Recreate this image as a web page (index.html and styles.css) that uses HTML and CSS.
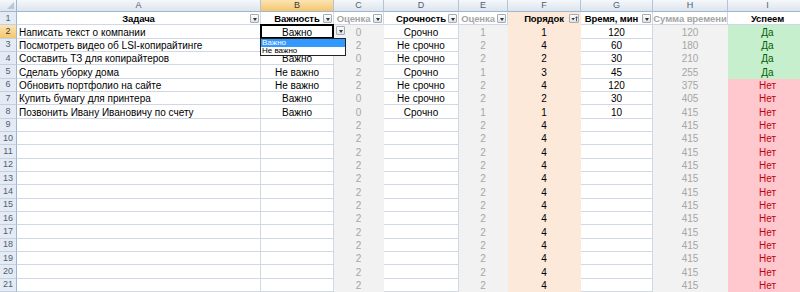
FILE: index.html
```html
<!DOCTYPE html>
<html lang="ru">
<head>
  <meta charset="UTF-8">
  <title>Задачи</title>
  <link rel="stylesheet" href="styles.css">
</head>
<body>
  <table class="sheet">
    <colgroup>
      <col class="w-rh"><col class="w-a"><col class="w-b"><col class="w-c"><col class="w-d">
      <col class="w-e"><col class="w-f"><col class="w-g"><col class="w-h"><col class="w-i">
    </colgroup>
    <tr class="colhead">
      <th class="corner"></th><th>A</th><th class="sel">B</th><th>C</th><th>D</th>
      <th>E</th><th>F</th><th>G</th><th>H</th><th>I</th>
    </tr>
    <tr class="head">
      <th class="rh">1</th>
      <td>Задача<span class="filter"></span></td>
      <td>Важность<span class="filter"></span></td>
      <td class="muted tight">Оценка<span class="filter"></span></td>
      <td>Срочность<span class="filter"></span></td>
      <td class="muted tight">Оценка<span class="filter"></span></td>
      <td class="ord">Порядок<span class="filter sort"><svg viewBox="0 0 9 9"><path d="M1 3.5h4L3 6z"/><path d="M6.8 2v5M5.6 3.2 6.8 2 8 3.2" fill="none" stroke="#333" stroke-width=".9"/></svg></span></td>
      <td class="tight">Время, мин<span class="filter"></span></td>
      <td class="muted">Сумма времени</td>
      <td>Успеем</td>
    </tr>
    <tr>
      <th class="rh sel">2</th><td class="task">Написать текст о компании</td>
      <td class="active">Важно
        <span class="active-frame"></span>
        <span class="filter drop"></span>
        <span class="list"><span class="item on">Важно</span><span class="item">Не важно</span></span>
      </td>
      <td class="est">0</td><td>Срочно</td><td class="est">1</td><td class="ord">1</td><td>120</td><td class="est">120</td><td class="yes">Да</td>
    </tr>
    <tr>
      <th class="rh">3</th><td class="task">Посмотреть видео об LSI-копирайтинге</td><td></td>
      <td class="est">2</td><td>Не срочно</td><td class="est">2</td><td class="ord">4</td><td>60</td><td class="est">180</td><td class="yes">Да</td>
    </tr>
    <tr>
      <th class="rh">4</th><td class="task">Составить ТЗ для копирайтеров</td><td>Важно</td>
      <td class="est">0</td><td>Не срочно</td><td class="est">2</td><td class="ord">2</td><td>30</td><td class="est">210</td><td class="yes">Да</td>
    </tr>
    <tr>
      <th class="rh">5</th><td class="task">Сделать уборку дома</td><td>Не важно</td>
      <td class="est">2</td><td>Срочно</td><td class="est">1</td><td class="ord">3</td><td>45</td><td class="est">255</td><td class="yes">Да</td>
    </tr>
    <tr>
      <th class="rh">6</th><td class="task">Обновить портфолио на сайте</td><td>Не важно</td>
      <td class="est">2</td><td>Не срочно</td><td class="est">2</td><td class="ord">4</td><td>120</td><td class="est">375</td><td class="no">Нет</td>
    </tr>
    <tr>
      <th class="rh">7</th><td class="task">Купить бумагу для принтера</td><td>Важно</td>
      <td class="est">0</td><td>Не срочно</td><td class="est">2</td><td class="ord">2</td><td>30</td><td class="est">405</td><td class="no">Нет</td>
    </tr>
    <tr>
      <th class="rh">8</th><td class="task">Позвонить Ивану Ивановичу по счету</td><td>Важно</td>
      <td class="est">0</td><td>Срочно</td><td class="est">1</td><td class="ord">1</td><td>10</td><td class="est">415</td><td class="no">Нет</td>
    </tr>
    <tr><th class="rh">9</th><td></td><td></td><td class="est">2</td><td></td><td class="est">2</td><td class="ord">4</td><td></td><td class="est">415</td><td class="no">Нет</td></tr>
    <tr><th class="rh">10</th><td></td><td></td><td class="est">2</td><td></td><td class="est">2</td><td class="ord">4</td><td></td><td class="est">415</td><td class="no">Нет</td></tr>
    <tr><th class="rh">11</th><td></td><td></td><td class="est">2</td><td></td><td class="est">2</td><td class="ord">4</td><td></td><td class="est">415</td><td class="no">Нет</td></tr>
    <tr><th class="rh">12</th><td></td><td></td><td class="est">2</td><td></td><td class="est">2</td><td class="ord">4</td><td></td><td class="est">415</td><td class="no">Нет</td></tr>
    <tr><th class="rh">13</th><td></td><td></td><td class="est">2</td><td></td><td class="est">2</td><td class="ord">4</td><td></td><td class="est">415</td><td class="no">Нет</td></tr>
    <tr><th class="rh">14</th><td></td><td></td><td class="est">2</td><td></td><td class="est">2</td><td class="ord">4</td><td></td><td class="est">415</td><td class="no">Нет</td></tr>
    <tr><th class="rh">15</th><td></td><td></td><td class="est">2</td><td></td><td class="est">2</td><td class="ord">4</td><td></td><td class="est">415</td><td class="no">Нет</td></tr>
    <tr><th class="rh">16</th><td></td><td></td><td class="est">2</td><td></td><td class="est">2</td><td class="ord">4</td><td></td><td class="est">415</td><td class="no">Нет</td></tr>
    <tr><th class="rh">17</th><td></td><td></td><td class="est">2</td><td></td><td class="est">2</td><td class="ord">4</td><td></td><td class="est">415</td><td class="no">Нет</td></tr>
    <tr><th class="rh">18</th><td></td><td></td><td class="est">2</td><td></td><td class="est">2</td><td class="ord">4</td><td></td><td class="est">415</td><td class="no">Нет</td></tr>
    <tr><th class="rh">19</th><td></td><td></td><td class="est">2</td><td></td><td class="est">2</td><td class="ord">4</td><td></td><td class="est">415</td><td class="no">Нет</td></tr>
    <tr><th class="rh">20</th><td></td><td></td><td class="est">2</td><td></td><td class="est">2</td><td class="ord">4</td><td></td><td class="est">415</td><td class="no">Нет</td></tr>
    <tr><th class="rh">21</th><td></td><td></td><td class="est">2</td><td></td><td class="est">2</td><td class="ord">4</td><td></td><td class="est">415</td><td class="no">Нет</td></tr>
  </table>
</body>
</html>
```

FILE: styles.css
```css
:root {
  --grid: #d0d7e5;
  --head-line: #9eb6ce;
  --head-text: #4d5f75;
  --muted: #a6a6a6;
  --est: #f2f2f2;
  --ord: #fde9d9;
  --yes-bg: #c6efce;
  --yes: #006100;
  --no-bg: #ffc7ce;
  --no: #c00010;
}

* {
  margin: 0;
  padding: 0;
  box-sizing: border-box;
}

body {
  font-family: 'Liberation Sans', Arial, sans-serif;
  font-size: 10px;
  color: #000;
  background: #fff;
  width: 800px;
  height: 292px;
  overflow: hidden;
}

.sheet {
  border-collapse: separate;
  border-spacing: 0;
  table-layout: fixed;
  width: 808px;
}

.w-rh { width: 17px; }
.w-a { width: 244px; }
.w-b { width: 73px; }
.w-c { width: 50px; }
.w-d { width: 75px; }
.w-e { width: 49px; }
.w-f { width: 73px; }
.w-g { width: 72px; }
.w-h { width: 75px; }
.w-i { width: 80px; }

.sheet tr {
  height: 13.33px;
}

.sheet td,
.sheet th {
  border-right: 1px solid var(--grid);
  border-bottom: 1px solid var(--grid);
  padding: 0 2px;
  white-space: nowrap;
  overflow: hidden;
  text-align: center;
  vertical-align: bottom;
  line-height: 11px;
  font-weight: normal;
}

/* column letters */
.sheet .colhead {
  height: 12px;
}

.colhead th {
  background: linear-gradient(#f5f8fb, #dde4ed);
  color: var(--head-text);
  font-size: 9px;
  line-height: 11px;
  vertical-align: middle;
  border-right: 1px solid #b4c3d5;
  border-bottom: 1px solid var(--head-line);
}

.colhead th.corner {
  position: relative;
  border-right-color: var(--head-line);
}

.corner::after {
  content: '';
  position: absolute;
  right: 2px;
  bottom: 2px;
  border-left: 7px solid transparent;
  border-bottom: 7px solid #b9c6d6;
}

/* row numbers */
.sheet th.rh {
  background: #e4ebf4;
  color: var(--head-text);
  font-size: 9px;
  padding: 0;
  vertical-align: middle;
  border-right: 1px solid var(--head-line);
  border-bottom: 1px solid #c5d1df;
}

.sheet th.sel {
  background: linear-gradient(#fbe4b4, #f4c66d);
  color: #3a3a3a;
}

/* header row with filters */
.head td {
  font-weight: bold;
  font-size: 9.5px;
  letter-spacing: -0.1px;
  position: relative;
  padding: 0;
  text-overflow: clip;
}

.head td.tight {
  padding-right: 10px;
}

.head td.muted {
  color: var(--muted);
}

.filter {
  position: absolute;
  right: 1px;
  top: 2px;
  width: 9px;
  height: 9px;
  border: 1px solid #a5acb5;
  border-radius: 1px;
  background: linear-gradient(#fdfdfd, #dfe3e8);
}

.filter::after {
  content: '';
  position: absolute;
  left: 1.5px;
  top: 2.5px;
  border-left: 2.5px solid transparent;
  border-right: 2.5px solid transparent;
  border-top: 3px solid #333;
}

.filter.sort {
  width: 10px;
}

.filter.sort::after {
  display: none;
}

.filter svg {
  display: block;
  width: 9px;
  height: 8px;
  fill: #333;
}

/* body cells */
.sheet td.task {
  text-align: left;
}

.sheet td.est {
  background: var(--est);
  border-color: var(--est);
  color: var(--muted);
}

.sheet td.ord {
  background: var(--ord);
  border-color: var(--ord);
}

.sheet td.yes {
  background: var(--yes-bg);
  border-color: var(--yes-bg);
  color: var(--yes);
}

.sheet td.no {
  background: var(--no-bg);
  border-color: var(--no-bg);
  color: var(--no);
}

/* active cell with validation list */
.sheet td.active {
  position: relative;
  overflow: visible;
}

.active-frame {
  position: absolute;
  left: -1px;
  top: -1px;
  right: -1px;
  bottom: -1px;
  border: 2px solid #000;
}

.filter.drop {
  right: -12px;
  top: 1px;
  z-index: 2;
}

.list {
  position: absolute;
  left: -1px;
  top: 13px;
  width: 86px;
  z-index: 3;
  display: flex;
  flex-direction: column;
  background: #fff;
  border: 1px solid #222;
  font-size: 8px;
  font-weight: normal;
  text-align: left;
  line-height: 8px;
}

.item {
  padding: 0 1px;
}

.item.on {
  background: #3399ff;
  color: #fff;
}
```
